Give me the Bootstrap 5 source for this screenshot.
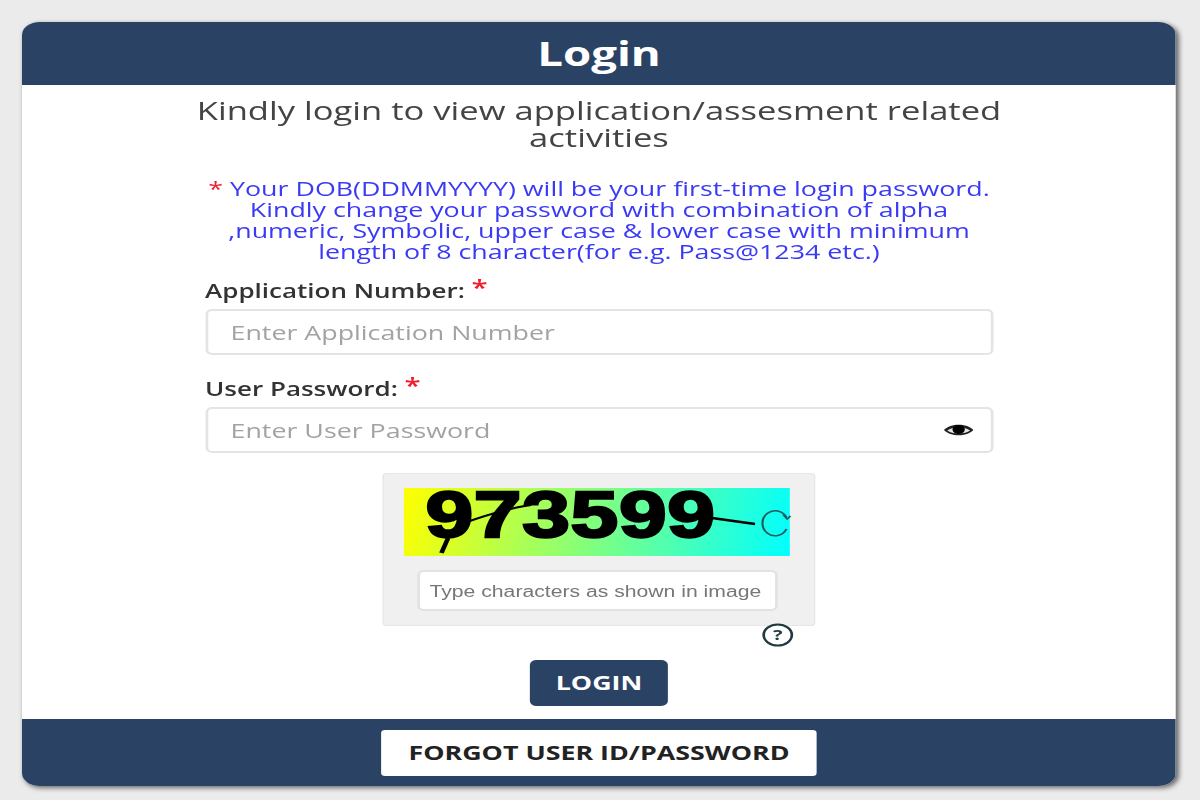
<!DOCTYPE html>
<html lang="en">
<head>
    <meta charset="UTF-8">
    <title>Login</title>
    <link href="https://cdn.jsdelivr.net/npm/bootstrap@5.3.2/dist/css/bootstrap.min.css" rel="stylesheet">
    <style>
        html, body { height: 800px; overflow: hidden; }
        body {
            background-color: #ebebeb;
            padding: 22px 0 0 22px;
            font-family: "Open Sans", sans-serif;
            color: #333;
        }
        /* the reference is a horizontally stretched capture, so the whole box is widened */
        .login-box {
            width: 861.2px;
            height: 764px;
            transform: scaleX(1.34);
            transform-origin: left top;
            border-radius: 13px;
            overflow: hidden;
            background: #fff;
            box-shadow: 2px 2px 5px rgba(0,0,0,.55);
        }
        .login-head {
            height: 63px;
            background: #2a4365;
            color: #fff;
            font-size: 34px;
            font-weight: 700;
            line-height: 62px;
        }
        .login-main { flex: 1; }
        .login-intro {
            margin: 12px 0 0;
            font-size: 25.8px;
            line-height: 27px;
            color: #444;
        }
        .login-note {
            margin: 27px 0 0;
            font-size: 20px;
            line-height: 21px;
            color: #3a3af5;
        }
        .req { color: #f01d2c; }
        .login-form { width: 588px; margin: 0 auto; }
        .field-label {
            font-size: 19.4px;
            font-weight: 600;
            line-height: 26px;
            color: #333;
            margin: 16px 0 5px;
        }
        .field-label .req { font-size: 22px; line-height: 10px; vertical-align: 3px; }
        .field-label.second { margin-top: 21px; }
        .field-box { height: 46px; }
        .login-form .form-control {
            height: 46px;
            font-size: 20px;
            padding: 0 17px;
            border: 2px solid #e4e4e4;
            border-radius: 5px;
            font-family: "Open Sans", sans-serif;
        }
        .login-form .form-control::placeholder { color: #a3a3a3; opacity: 1; }
        .eye-icon { position: absolute; right: 15px; top: 14px; }
        .captcha-panel {
            width: 323px;
            height: 153px;
            margin: 20px auto 0;
            padding: 14px 0 0 15px;
            background: #f0f0f0;
            border: 1px solid #e6e6e6;
            border-radius: 3px;
        }
        .captcha-img {
            width: 288px;
            height: 68px;
            background: linear-gradient(100deg, #ffff00, #00ffff);
        }
        .captcha-code {
            font-family: "Liberation Sans", sans-serif;
            font-weight: 700;
            font-size: 64px;
            line-height: 54px;
            letter-spacing: .5px;
            color: #000;
            padding-left: 16px;
            -webkit-text-stroke: 2.4px #000;
        }
        .captcha-lines { position: absolute; left: 0; top: 0; overflow: visible; }
        .login-form .captcha-input {
            width: 269px;
            height: 41px;
            margin: 14px 0 0 10px;
            padding: 2px 7px 0;
            font-family: "Liberation Sans", sans-serif;
            font-size: 15.8px;
            border: 2px solid #dfe3e6;
            background: #fff;
        }
        .login-form .captcha-input::placeholder { color: #777; }
        .help-row { width: 323px; margin: 0 auto; height: 34px; }
        .help-icon { margin: 0 16px 16px 0; display: block; }
        .login-btn {
            width: 103px;
            height: 46px;
            background: #2a4365;
            color: #fff;
            font-size: 20px;
            font-weight: 700;
            padding: 0;
            border-radius: 5px;
            border: 0;
        }
        .login-foot { height: 67px; background: #2a4365; padding-top: 11px; }
        .forgot-btn {
            width: 325px;
            height: 46px;
            background: #fff;
            color: #222;
            font-size: 20px;
            font-weight: 700;
            padding: 0;
            border-radius: 3px;
            border: 0;
        }
    </style>
</head>
<body>
    <div class="login-box d-flex flex-column">
        <div class="login-head text-center">Login</div>
        <div class="login-main">
            <div class="login-intro text-center">Kindly login to view application/assesment related<br>activities</div>
            <div class="login-note text-center"><span class="req">*</span> Your DOB(DDMMYYYY) will be your first-time login password.<br>Kindly change your password with combination of alpha<br>,numeric, Symbolic, upper case &amp; lower case with minimum<br>length of 8 character(for e.g. Pass@1234 etc.)</div>
            <form class="login-form">
                <div class="field-label">Application Number: <span class="req">*</span></div>
                <div class="field-box">
                    <input type="text" class="form-control" placeholder="Enter Application Number">
                </div>
                <div class="field-label second">User Password: <span class="req">*</span></div>
                <div class="field-box position-relative">
                    <input type="password" class="form-control" placeholder="Enter User Password">
                    <svg class="eye-icon" width="22" height="18" viewBox="0 0 22 18">
                        <path d="M0 9C5 2 17 2 22 9C17 16 5 16 0 9Z" fill="#222"/>
                        <path d="M2.5 9.5C6 5.5 16 5.5 19.5 9.5C16 13.5 6 13.5 2.5 9.5Z" fill="#dfe8ee"/>
                        <circle cx="11" cy="8.5" r="4.6" fill="#000"/>
                    </svg>
                </div>
                <div class="captcha-panel">
                    <div class="captcha-img position-relative">
                        <div class="captcha-code">973599</div>
                        <svg class="captcha-lines" width="288" height="68" viewBox="0 0 288 68">
                            <path d="M28 65L33 50" stroke="#000" stroke-width="3.5" fill="none"/>
                            <path d="M47 34C62 27 78 20 95 17" stroke="#000" stroke-width="2" fill="none"/>
                            <path d="M230 30L262 36" stroke="#000" stroke-width="2.4" fill="none"/>
                            <path d="M285.5 29.5A9.5 12.5 0 1 0 285.5 41" stroke="#1f5a60" stroke-width="1.6" fill="none"/>
                            <path d="M283 26.5L286 31L288.5 28" stroke="#1f5a60" stroke-width="1.4" fill="none"/>
                        </svg>
                    </div>
                    <input type="text" class="form-control captcha-input" placeholder="Type characters as shown in image">
                </div>
                <div class="help-row d-flex justify-content-end align-items-center">
                    <svg class="help-icon" width="24" height="24" viewBox="0 0 24 24">
                        <circle cx="12" cy="12" r="10.5" fill="none" stroke="#1f3a40" stroke-width="2"/>
                        <text x="12" y="17.5" text-anchor="middle" font-family="Open Sans" font-size="15" font-weight="700" fill="#1f3a40">?</text>
                    </svg>
                </div>
                <div class="text-center">
                    <button type="button" class="btn login-btn">LOGIN</button>
                </div>
            </form>
        </div>
        <div class="login-foot text-center">
            <button type="button" class="btn forgot-btn">FORGOT USER ID/PASSWORD</button>
        </div>
    </div>
    <script src="https://cdn.jsdelivr.net/npm/bootstrap@5.3.2/dist/js/bootstrap.bundle.min.js"></script>
</body>
</html>
